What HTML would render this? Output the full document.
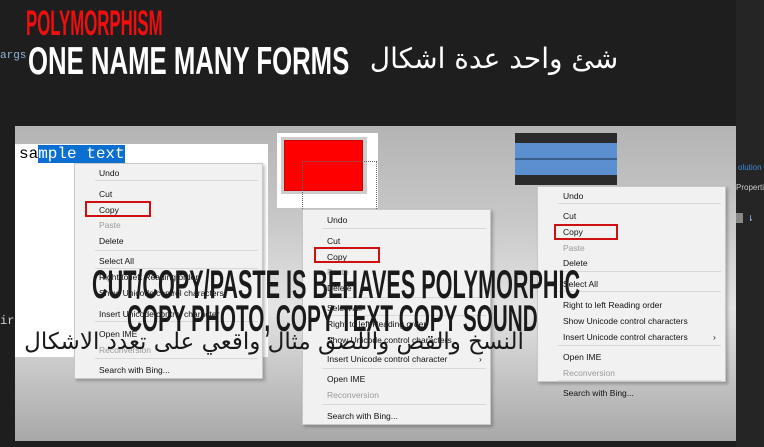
<!DOCTYPE html>
<html><head><meta charset="utf-8"><style>
*{margin:0;padding:0;box-sizing:border-box}
body{width:764px;height:447px;overflow:hidden;background:#1e1e1e;position:relative;font-family:"Liberation Sans",sans-serif}
.a{position:absolute}
.panel{left:15px;top:126px;width:721px;height:315px;background:linear-gradient(#b4b4b4 0%,#c8c8c8 30%,#e4e4e4 58%,#c4c4c4 80%,#a8a8a8 100%)}
.menu{position:absolute;width:189px;background:#f1f1f1;border:1px solid #c8c8c8;box-shadow:2px 2px 3px rgba(0,0,0,.25)}
.it{position:absolute;font-size:8.5px;color:#111;white-space:nowrap;line-height:10px}
.dis{color:#9a9a9a}
.sep{position:absolute;left:20px;right:4px;height:1px;background:#d8d8d8}
.box{position:absolute;border:2px solid #d01010}
.big{position:absolute;font-family:"Liberation Sans Narrow","Liberation Sans",sans-serif;font-weight:bold;white-space:nowrap;transform-origin:0 0}
.ar{position:absolute;font-family:"DejaVu Sans",sans-serif;white-space:nowrap;direction:rtl}
</style></head><body>
<div class="a" style="left:0;top:50px;color:#8fb5d8;font:11px 'Liberation Mono',monospace">args</div>
<div class="a" style="left:0;top:314px;color:#ccc;font:12px 'Liberation Mono',monospace">ir</div>
<div class="a" style="left:736px;top:0;width:28px;height:447px;background:#252526"></div>
<div class="a" style="left:738px;top:163px;color:#3a8ad8;font-size:8px">olution</div>
<div class="a" style="left:736px;top:183px;color:#ccc;font-size:8px">Propertie</div>
<div class="a" style="left:733px;top:213px;width:10px;height:10px;background:#888"></div>
<div class="a" style="left:747px;top:214px;color:#9cf;font-size:8px">⇂</div>

<div class="big" style="left:26px;top:4px;color:#f00e0e;font-size:35px;transform:scaleX(.48)">POLYMORPHISM</div>
<div class="big" style="left:28px;top:40px;color:#fff;font-size:39px;transform:scaleX(.66)">ONE NAME MANY FORMS</div>
<div class="ar" style="left:358px;top:42px;width:272px;text-align:center;color:#fff;font-size:28px">شئ واحد عدة اشكال</div>

<div class="a panel"></div>
<div class="a" style="left:15px;top:144px;width:253px;height:213px;background:#fff"></div>
<div class="a" style="left:19px;top:145px;font:16px 'Liberation Mono',monospace;color:#000">sa<span style="background:#0a6fd1;color:#fff">mple text</span></div>

<div class="a" style="left:277px;top:133px;width:101px;height:75px;background:#fff"></div>
<div class="a" style="left:281px;top:137px;width:86px;height:57px;background:#ccc"></div>
<div class="a" style="left:284px;top:140px;width:79px;height:51px;background:#f00;border:1px solid #c00"></div>
<div class="a" style="left:302px;top:161px;width:75px;height:50px;border:1px dotted #666"></div>

<div class="a" style="left:515px;top:133px;width:102px;height:52px;background:#2b2b2b"></div>
<div class="a" style="left:515px;top:143px;width:102px;height:32px;background:#5b8fd0"></div>
<div class="a" style="left:515px;top:158px;width:102px;height:2px;background:#3a5f8f"></div>

<div class="menu" style="left:74px;top:163px;height:216px">
<div class="it" style="left:24px;top:4px">Undo</div><div class="sep" style="top:16px"></div>
<div class="it" style="left:24px;top:25px">Cut</div>
<div class="it" style="left:24px;top:41px">Copy</div>
<div class="box" style="left:10px;top:37px;width:66px;height:16px"></div>
<div class="it dis" style="left:24px;top:56px">Paste</div>
<div class="it" style="left:24px;top:72px">Delete</div><div class="sep" style="top:86px"></div>
<div class="it" style="left:24px;top:92px">Select All</div><div class="sep" style="top:104px"></div>
<div class="it" style="left:24px;top:108px">Right to left Reading order</div>
<div class="it" style="left:24px;top:124px">Show Unicode control characters</div>
<div class="it" style="left:24px;top:145px">Insert Unicode control character</div><div class="sep" style="top:157px"></div>
<div class="it" style="left:24px;top:165px">Open IME</div>
<div class="it dis" style="left:24px;top:181px">Reconversion</div><div class="sep" style="top:194px"></div>
<div class="it" style="left:24px;top:201px">Search with Bing...</div>
</div>

<div class="menu" style="left:302px;top:209px;height:216px">
<div class="it" style="left:24px;top:5px">Undo</div><div class="sep" style="top:18px"></div>
<div class="it" style="left:24px;top:26px">Cut</div>
<div class="it" style="left:24px;top:42px">Copy</div>
<div class="box" style="left:11px;top:37px;width:66px;height:16px"></div>
<div class="it dis" style="left:24px;top:57px">Paste</div>
<div class="it" style="left:24px;top:73px">Delete</div><div class="sep" style="top:87px"></div>
<div class="it" style="left:24px;top:93px">Select All</div><div class="sep" style="top:105px"></div>
<div class="it" style="left:24px;top:109px">Right to left Reading order</div>
<div class="it" style="left:24px;top:125px">Show Unicode control characters</div>
<div class="it" style="left:24px;top:144px">Insert Unicode control character</div><div class="it" style="left:176px;top:144px">›</div><div class="sep" style="top:158px"></div>
<div class="it" style="left:24px;top:164px">Open IME</div>
<div class="it dis" style="left:24px;top:180px">Reconversion</div><div class="sep" style="top:194px"></div>
<div class="it" style="left:24px;top:201px">Search with Bing...</div>
</div>

<div class="menu" style="left:537px;top:186px;height:196px">
<div class="it" style="left:25px;top:4px">Undo</div><div class="sep" style="top:16px"></div>
<div class="it" style="left:25px;top:24px">Cut</div>
<div class="it" style="left:25px;top:40px">Copy</div>
<div class="box" style="left:16px;top:37px;width:64px;height:16px"></div>
<div class="it dis" style="left:25px;top:56px">Paste</div>
<div class="it" style="left:25px;top:71px">Delete</div><div class="sep" style="top:84px"></div>
<div class="it" style="left:25px;top:92px">Select All</div><div class="sep" style="top:104px"></div>
<div class="it" style="left:25px;top:113px">Right to left Reading order</div>
<div class="it" style="left:25px;top:129px">Show Unicode control characters</div>
<div class="it" style="left:25px;top:145px">Insert Unicode control characters</div><div class="it" style="left:175px;top:145px">›</div><div class="sep" style="top:158px"></div>
<div class="it" style="left:25px;top:165px">Open IME</div>
<div class="it dis" style="left:25px;top:181px">Reconversion</div><div class="sep" style="top:193px"></div>
<div class="it" style="left:25px;top:201px">Search with Bing...</div>
</div>

<div class="big" style="left:92px;top:263px;color:#1a1a1a;font-size:40px;transform:scaleX(.54)">CUT/COPY/PASTE IS BEHAVES POLYMORPHIC</div>
<div class="big" style="left:127px;top:298px;color:#1a1a1a;font-size:37px;transform:scaleX(.56)">COPY PHOTO, COPY TEXT COPY SOUND</div>
<div class="ar" style="left:8px;top:329px;width:532px;text-align:center;color:#1a1a1a;font-size:23px">النسخ والقص واللصق مثال واقعي على تعدد الاشكال</div>
</body></html>
